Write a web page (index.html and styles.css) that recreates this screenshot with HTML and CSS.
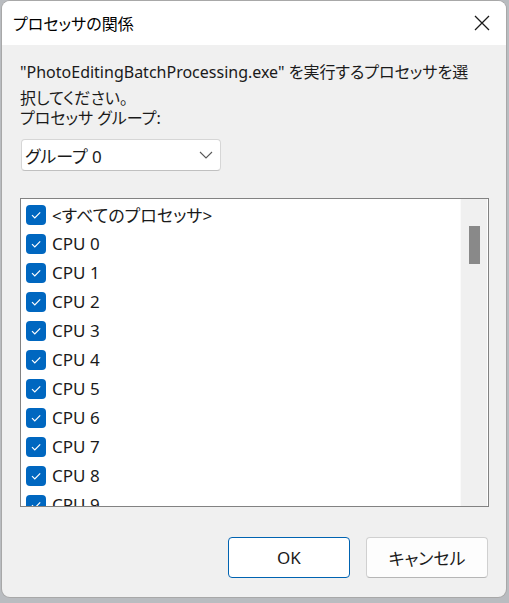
FILE: index.html
```html
<!DOCTYPE html>
<html lang="ja">
<head>
<meta charset="utf-8">
<title>プロセッサの関係</title>
<link rel="stylesheet" href="styles.css">
</head>
<body>
<div class="dialog">
  <div class="titlebar">
    <span class="title">プロセッサの関係</span>
    <span class="close">
      <svg width="16" height="16" viewBox="0 0 16 16"><path d="M1 1 L15 15 M15 1 L1 15" stroke="#1a1a1a" stroke-width="1.3" fill="none"/></svg>
    </span>
  </div>
  <div class="content">
    <div class="desc">"PhotoEditingBatchProcessing.exe" を実行するプロセッサを選<br>択してください。</div>
    <div class="label">プロセッサ グループ:</div>
    <div class="combo">
      <span>グループ 0</span>
      <svg width="14" height="8" viewBox="0 0 14 8"><path d="M1 1 L7 7 L13 1" stroke="#5a5a5a" stroke-width="1.1" fill="none"/></svg>
    </div>
    <div class="listbox">
      <div class="items">
        <div class="item"><span class="cb"><svg width="20" height="20" viewBox="0 0 20 20"><path d="M6 10.2 L8.8 13 L14.2 7.4" stroke="#fff" stroke-width="1.2" fill="none"/></svg></span><span>&lt;すべてのプロセッサ&gt;</span></div>
        <div class="item"><span class="cb"><svg width="20" height="20" viewBox="0 0 20 20"><path d="M6 10.2 L8.8 13 L14.2 7.4" stroke="#fff" stroke-width="1.2" fill="none"/></svg></span><span>CPU 0</span></div>
        <div class="item"><span class="cb"><svg width="20" height="20" viewBox="0 0 20 20"><path d="M6 10.2 L8.8 13 L14.2 7.4" stroke="#fff" stroke-width="1.2" fill="none"/></svg></span><span>CPU 1</span></div>
        <div class="item"><span class="cb"><svg width="20" height="20" viewBox="0 0 20 20"><path d="M6 10.2 L8.8 13 L14.2 7.4" stroke="#fff" stroke-width="1.2" fill="none"/></svg></span><span>CPU 2</span></div>
        <div class="item"><span class="cb"><svg width="20" height="20" viewBox="0 0 20 20"><path d="M6 10.2 L8.8 13 L14.2 7.4" stroke="#fff" stroke-width="1.2" fill="none"/></svg></span><span>CPU 3</span></div>
        <div class="item"><span class="cb"><svg width="20" height="20" viewBox="0 0 20 20"><path d="M6 10.2 L8.8 13 L14.2 7.4" stroke="#fff" stroke-width="1.2" fill="none"/></svg></span><span>CPU 4</span></div>
        <div class="item"><span class="cb"><svg width="20" height="20" viewBox="0 0 20 20"><path d="M6 10.2 L8.8 13 L14.2 7.4" stroke="#fff" stroke-width="1.2" fill="none"/></svg></span><span>CPU 5</span></div>
        <div class="item"><span class="cb"><svg width="20" height="20" viewBox="0 0 20 20"><path d="M6 10.2 L8.8 13 L14.2 7.4" stroke="#fff" stroke-width="1.2" fill="none"/></svg></span><span>CPU 6</span></div>
        <div class="item"><span class="cb"><svg width="20" height="20" viewBox="0 0 20 20"><path d="M6 10.2 L8.8 13 L14.2 7.4" stroke="#fff" stroke-width="1.2" fill="none"/></svg></span><span>CPU 7</span></div>
        <div class="item"><span class="cb"><svg width="20" height="20" viewBox="0 0 20 20"><path d="M6 10.2 L8.8 13 L14.2 7.4" stroke="#fff" stroke-width="1.2" fill="none"/></svg></span><span>CPU 8</span></div>
        <div class="item"><span class="cb"><svg width="20" height="20" viewBox="0 0 20 20"><path d="M6 10.2 L8.8 13 L14.2 7.4" stroke="#fff" stroke-width="1.2" fill="none"/></svg></span><span>CPU 9</span></div>
      </div>
      <div class="scrollbar"><div class="thumb"></div></div>
    </div>
    <div class="buttons">
      <button class="btn primary">OK</button>
      <button class="btn">キャンセル</button>
    </div>
  </div>
</div>
</body>
</html>
```
FILE: styles.css
```css
html, body {
  margin: 0;
  padding: 0;
}
body {
  width: 509px;
  height: 603px;
  overflow: hidden;
  background: #b9bcc0;
  font-family: "Noto Sans", "Noto Sans CJK JP", sans-serif;
  font-feature-settings: "palt" 1;
  color: #1a1a1a;
}
.dialog {
  margin: 1px 0 0 2px;
  width: 504px;
  height: 596px;
  border-radius: 8px;
  overflow: hidden;
  background: #f0f0f0;
  display: flex;
  flex-direction: column;
  box-shadow: 0 0 0 1px #a8a8a8;
}
.titlebar {
  height: 44px;
  flex: none;
  background: #ffffff;
  display: flex;
  align-items: center;
  justify-content: space-between;
  padding: 0 16px 0 11px;
}
.title {
  font-size: 16px;
  color: #000;
}
.close {
  display: flex;
  align-items: center;
}
.content {
  flex: 1;
  padding: 14px 17px 0 18px;
  display: flex;
  flex-direction: column;
}
.desc {
  font-size: 16px;
  line-height: 26px;
  white-space: nowrap;
}
.label {
  font-size: 16px;
  line-height: 20px;
  margin-top: -3px;
}
.combo {
  margin-top: 11px;
  margin-left: 1px;
  width: 188px;
  height: 30px;
  background: #fff;
  border: 1px solid #d6d6d6;
  border-bottom-color: #c0c0c0;
  border-radius: 4px;
  display: flex;
  align-items: center;
  justify-content: space-between;
  padding: 0 7px 0 3px;
  box-sizing: content-box;
  font-size: 17px;
}
.listbox {
  margin-top: 27px;
  width: 467px;
  height: 307px;
  border: 1px solid #828282;
  background: #fff;
  display: flex;
  overflow: hidden;
}
.items {
  flex: 1;
  padding: 1px 0 0 5px;
}
.item {
  height: 29px;
  display: flex;
  align-items: center;
  gap: 6px;
  font-size: 17px;
  white-space: nowrap;
}
.cb {
  width: 20px;
  height: 20px;
  flex: none;
  border-radius: 4px;
  background: #0067c0;
  display: flex;
}
.scrollbar {
  width: 26px;
  flex: none;
  background: #f0f0f0;
  border-left: 1px solid #fafafa;
  border-right: 1px solid #fff;
  position: relative;
}
.thumb {
  position: absolute;
  left: 8px;
  top: 27px;
  width: 11px;
  height: 38px;
  background: #898989;
}
.buttons {
  margin-top: 30px;
  display: flex;
  justify-content: flex-end;
  gap: 16px;
  margin-right: 1px;
}
.btn {
  width: 122px;
  height: 41px;
  background: #fdfdfd;
  border: 1px solid #d0d0d0;
  border-bottom-color: #b6b6b6;
  border-radius: 4px;
  font-family: inherit;
  font-feature-settings: "palt" 1;
  font-size: 17px;
  color: #1a1a1a;
  padding: 0;
}
.btn.primary {
  border: 1px solid #0063b1;
  background: #fff;
}
```
